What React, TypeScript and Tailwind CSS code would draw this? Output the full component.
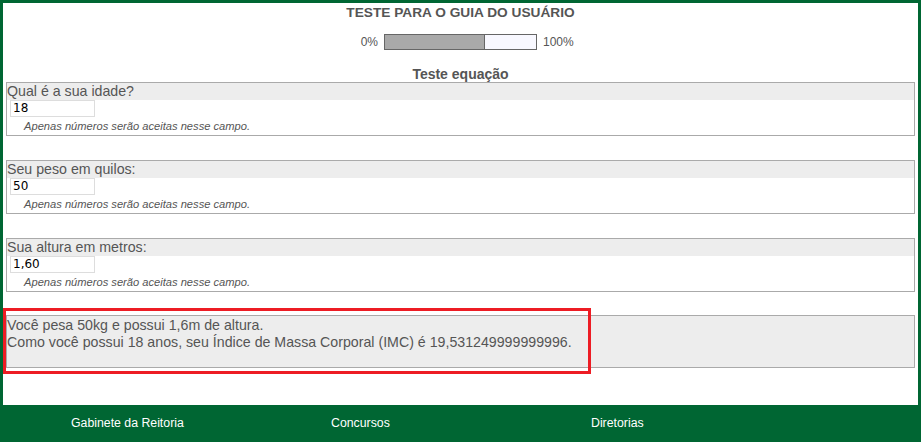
import React from "react";

const font = { fontFamily: '"Liberation Sans", Arial, sans-serif' };

function Field({ label, value, mb }: { label: string; value: string; mb: string }) {
  return (
    <div className={`mx-[3px] border border-[#aaaaaa] flex flex-col ${mb}`}>
      <div className="h-[17px] bg-[#ededed] text-[14.2px] leading-[17px] text-[#555555] whitespace-nowrap">
        {label}
      </div>
      <div className="h-[17px] flex items-start">
        <div
          className="ml-[3px] w-[85px] h-[17px] border border-[#dddddd] bg-white text-[12px] leading-[15px] text-black pl-[2px]"
          style={{ fontFamily: '"DejaVu Sans", Verdana, sans-serif' }}
        >
          {value}
        </div>
      </div>
      <div className="h-[18px] pl-[17px] pt-[1px] text-[11.15px] leading-[16px] italic text-[#555555]">
        Apenas números serão aceitas nesse campo.
      </div>
    </div>
  );
}

export default function App() {
  return (
    <div className="w-[921px] h-[442px] bg-[#006633] flex flex-col overflow-hidden" style={font}>
      <div className="relative mx-[3px] mt-[3px] h-[402px] bg-white flex flex-col">
        <div className="pt-[2px] h-[17px] text-center text-[13.7px] leading-[15px] font-bold text-[#555555]">
          TESTE PARA O GUIA DO USUÁRIO
        </div>
        <div className="mt-[13px] h-[16px] grid grid-cols-[1fr_auto_1fr] items-center gap-[6px] text-[12px] text-[#555555]">
          <span className="text-right">0%</span>
          <div className="w-[153px] h-[16px] border border-[#666666] bg-[#f8f8ff] flex">
            <div className="w-[100px] h-full bg-[#a9a9a9] border-r border-[#666666]" />
          </div>
          <span>100%</span>
        </div>
        <div className="mt-[17px] h-[16px] text-center text-[14px] leading-[16px] font-bold text-[#555555]">
          Teste equação
        </div>
        <div>
          <Field label="Qual é a sua idade?" value="18" mb="mb-[24px]" />
          <Field label="Seu peso em quilos:" value="50" mb="mb-[24px]" />
          <Field label="Sua altura em metros:" value="1,60" mb="mb-[23px]" />
          <div className="mx-[3px] h-[53px] border border-[#aaaaaa] bg-[#ededed] pt-[1px] text-[14.2px] leading-[17px] text-[#555555] whitespace-nowrap">
            <div>Você pesa 50kg e possui 1,6m de altura.</div>
            <div>Como você possui 18 anos, seu Índice de Massa Corporal (IMC) é 19,531249999999996.</div>
          </div>
        </div>
        <div className="absolute left-0 top-[305px] w-[588px] h-[66px] border-[3px] border-[#ed1c24]" />
      </div>
      <div className="flex-1 flex items-center pl-[71px] text-[12.3px] text-white">
        <div className="w-[260px]">Gabinete da Reitoria</div>
        <div className="w-[260px]">Concursos</div>
        <div className="w-[260px]">Diretorias</div>
      </div>
    </div>
  );
}
